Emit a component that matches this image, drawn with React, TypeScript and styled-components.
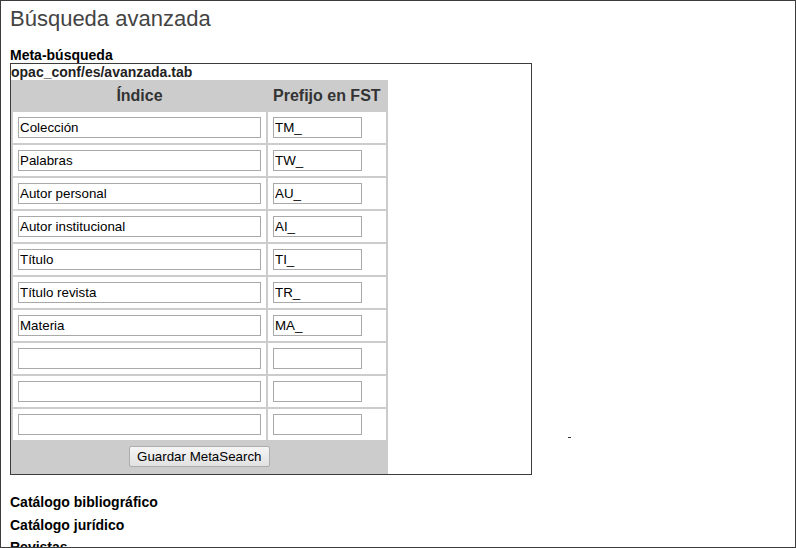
import React from "react";
import styled, { createGlobalStyle } from "styled-components";

const Global = createGlobalStyle`
  html, body { margin: 0; padding: 0; background: #fff; }
  body { font-family: "Liberation Sans", Arial, sans-serif; }
`;

const Frame = styled.div`
  box-sizing: border-box;
  width: 796px;
  height: 548px;
  border: 1px solid #3c3c3c;
  overflow: hidden;
  padding: 5px 9px 0 9px;
  background: #fff;
  font-family: "Liberation Sans", Arial, sans-serif;
`;

const Title = styled.h1`
  margin: 0;
  font-size: 22px;
  font-weight: normal;
  line-height: 25px;
  color: #444;
`;

const SectionLabel = styled.div`
  margin-top: 16px;
  font-size: 14px;
  font-weight: bold;
  line-height: 16px;
  color: #000;
`;

const BoxRow = styled.div`
  display: flex;
  align-items: flex-end;
`;

const FileBox = styled.div`
  box-sizing: border-box;
  width: 522px;
  border: 1px solid #3c3c3c;
`;

const FilePath = styled.div`
  font-size: 14px;
  font-weight: bold;
  line-height: 16px;
  color: #222;
`;

const MetaTable = styled.table`
  background: #ccc;
  border-spacing: 2px;
  border-collapse: separate;
  font-family: "Liberation Sans", Arial, sans-serif;
`;

const HeadCell = styled.th`
  padding: 5px;
  font-size: 16px;
  font-weight: bold;
  line-height: 18px;
  color: #333;
  text-align: center;
  white-space: nowrap;
`;

const Cell = styled.td`
  background: #fff;
  padding: 5px;
  vertical-align: middle;
`;

const TextInput = styled.input<{ $w: number }>`
  display: block;
  box-sizing: border-box;
  width: ${(p) => p.$w}px;
  height: 21px;
  margin: 0;
  padding: 0 1px;
  border: 1px solid #a9a9a9;
  font-family: "Liberation Sans", Arial, sans-serif;
  font-size: 13.33px;
  color: #000;
  background: #fff;
  outline: none;
`;

const FooterCell = styled.td`
  padding: 4px 5px 5px;
  text-align: center;
`;

const SaveButton = styled.button`
  box-sizing: border-box;
  height: 21px;
  padding: 0 7px;
  border: 1px solid #adadad;
  border-radius: 2px;
  background: linear-gradient(#f5f5f5, #e1e1e1);
  font-family: "Liberation Sans", Arial, sans-serif;
  font-size: 13.33px;
  color: #000;
  line-height: 19px;
`;

const Aside = styled.div`
  margin: 0 0 37px 36px;
  width: 3px;
  height: 1px;
  background: #333;
`;

const CatalogList = styled.div`
  margin-top: 19px;
`;

const CatalogLink = styled.div`
  font-size: 14px;
  font-weight: bold;
  line-height: 16px;
  margin-bottom: 6.6px;
  color: #000;
`;

const rows: [string, string][] = [
  ["Colección", "TM_"],
  ["Palabras", "TW_"],
  ["Autor personal", "AU_"],
  ["Autor institucional", "AI_"],
  ["Título", "TI_"],
  ["Título revista", "TR_"],
  ["Materia", "MA_"],
  ["", ""],
  ["", ""],
  ["", ""],
];

export default function App() {
  return (
    <>
      <Global />
      <Frame>
        <Title>Búsqueda avanzada</Title>
        <SectionLabel>Meta-búsqueda</SectionLabel>
        <BoxRow>
          <FileBox>
            <FilePath>opac_conf/es/avanzada.tab</FilePath>
            <MetaTable>
              <thead>
                <tr>
                  <HeadCell>Índice</HeadCell>
                  <HeadCell>Prefijo en FST</HeadCell>
                </tr>
              </thead>
              <tbody>
                {rows.map(([idx, pre], i) => (
                  <tr key={i}>
                    <Cell>
                      <TextInput $w={243} defaultValue={idx} />
                    </Cell>
                    <Cell>
                      <TextInput $w={89} defaultValue={pre} />
                    </Cell>
                  </tr>
                ))}
                <tr>
                  <FooterCell colSpan={2}>
                    <SaveButton type="button">Guardar MetaSearch</SaveButton>
                  </FooterCell>
                </tr>
              </tbody>
            </MetaTable>
          </FileBox>
          <Aside />
        </BoxRow>
        <CatalogList>
          <CatalogLink>Catálogo bibliográfico</CatalogLink>
          <CatalogLink>Catálogo jurídico</CatalogLink>
          <CatalogLink>Revistas</CatalogLink>
        </CatalogList>
      </Frame>
    </>
  );
}
